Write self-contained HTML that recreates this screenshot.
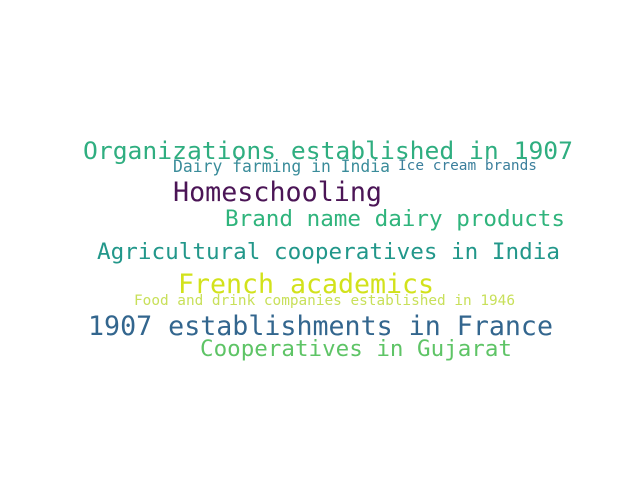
<!DOCTYPE html>
<html><head><meta charset="utf-8"><style>
html,body{margin:0;padding:0;background:#fff;width:640px;height:480px;overflow:hidden}
svg{display:block}
text{font-family:"DejaVu Sans Mono","Liberation Mono",monospace}
</style></head><body>
<svg width="640" height="480" xmlns="http://www.w3.org/2000/svg">
<rect width="640" height="480" fill="#fff"/>
<text x="83" y="159" font-size="24" fill="#2fae80" textLength="490" lengthAdjust="spacingAndGlyphs">Organizations established in 1907</text>
<text x="173" y="172" font-size="16.4" fill="#3a8c9a" textLength="217" lengthAdjust="spacingAndGlyphs">Dairy farming in India</text>
<text x="398" y="170" font-size="14.4" fill="#3b7f9c" textLength="139" lengthAdjust="spacingAndGlyphs">Ice cream brands</text>
<text x="173" y="201" font-size="26.7" fill="#4b1556" textLength="209" lengthAdjust="spacingAndGlyphs">Homeschooling</text>
<text x="225" y="226" font-size="22.6" fill="#2fb47c" textLength="340" lengthAdjust="spacingAndGlyphs">Brand name dairy products</text>
<text x="97" y="259" font-size="22.6" fill="#22978a" textLength="463" lengthAdjust="spacingAndGlyphs">Agricultural cooperatives in India</text>
<text x="178" y="293" font-size="26.6" fill="#d2e21b" textLength="256" lengthAdjust="spacingAndGlyphs">French academics</text>
<text x="134" y="305" font-size="14.4" fill="#c8e05a" textLength="381" lengthAdjust="spacingAndGlyphs">Food and drink companies established in 1946</text>
<text x="88" y="335" font-size="26.6" fill="#33668e" textLength="465" lengthAdjust="spacingAndGlyphs">1907 establishments in France</text>
<text x="200" y="356" font-size="22.5" fill="#5ec466" textLength="312" lengthAdjust="spacingAndGlyphs">Cooperatives in Gujarat</text>
</svg>
</body></html>
